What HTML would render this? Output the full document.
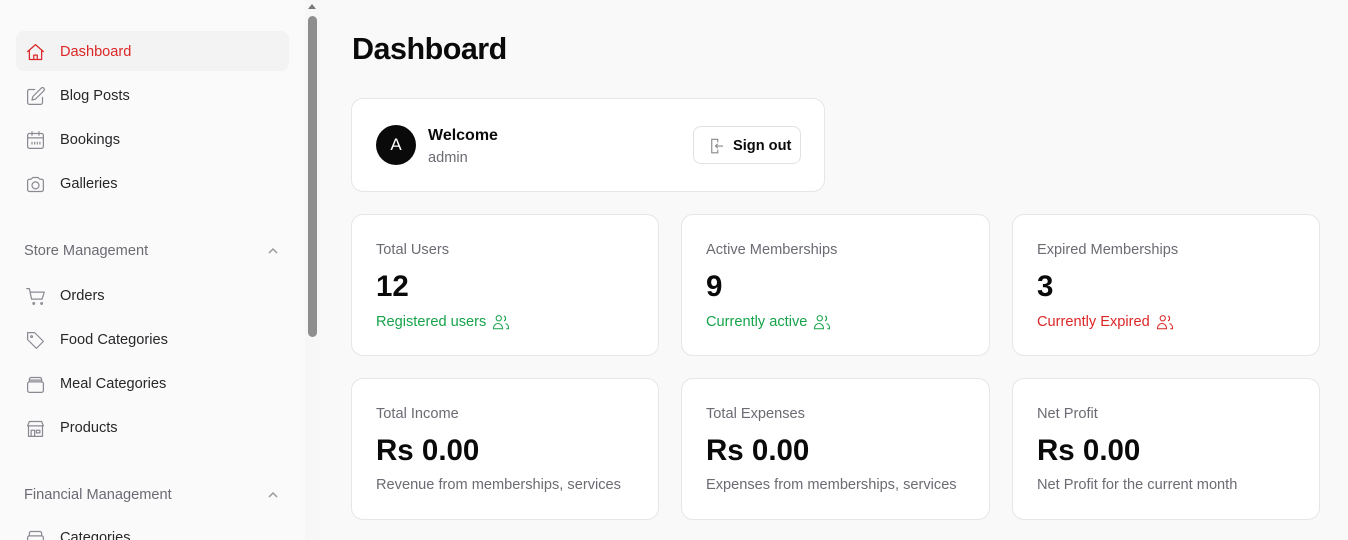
<!DOCTYPE html>
<html><head><style>
*{box-sizing:border-box;margin:0;padding:0}
html,body{width:1348px;height:540px;overflow:hidden}
body{background:#f9f9f9;font-family:"Liberation Sans",sans-serif;position:relative}
.side{position:absolute;left:0;top:0;width:305px;height:540px;background:#fafafa}
.sb{position:absolute;left:305px;top:0;width:15px;height:540px;background:#f7f7f7}
.thumb{position:absolute;left:308px;top:16px;width:9px;height:321px;background:#8e8e8e;border-radius:5px}
.arrow{position:absolute;left:308px;top:4px;width:0;height:0;border-left:4px solid transparent;border-right:4px solid transparent;border-bottom:5px solid #777}
.item{position:absolute;left:16px;width:273px;height:40px;display:flex;align-items:center;padding-left:9px;padding-top:2px;font-size:14.6px;color:#27272a;border-radius:8px}
.item svg{width:21px;height:21px;margin-right:14px;fill:none;stroke:#8a8a93;stroke-width:1.4;stroke-linecap:round;stroke-linejoin:round}
.item.act{background:#f3f3f3;color:#dc2626}
.item.act svg{stroke:#dc2626}
.sec{position:absolute;left:24px;width:255px;font-size:14.6px;color:#6b6b73;display:flex;justify-content:space-between;align-items:center}
.sec svg{width:12px;height:12px;fill:none;stroke:#999;stroke-width:1.5}
h1{position:absolute;left:352px;top:32px;font-size:30.5px;font-weight:700;color:#0a0a0a;letter-spacing:-0.5px}
.card{position:absolute;background:#fff;border:1px solid #e6e6e6;border-radius:12px}
.lbl{position:absolute;left:24px;top:27px;font-size:14.6px;color:#6b6b73}
.val{position:absolute;left:24px;top:55px;font-size:29.5px;color:#0a0a0a;font-weight:700}
.sub{position:absolute;left:24px;top:98px;font-size:14.6px;color:#6b6b73;display:flex;align-items:center}
.sub svg{width:18px;height:18px;margin-left:6px;fill:none;stroke:currentColor;stroke-width:1.4}
.g{color:#16a34a}.r{color:#dc2626}
</style></head><body>
<div class="side">
<div class="item act" style="top:31px"><svg viewBox="0 0 24 24"><path d="M3 11L12 3l9 8M5 9.5V20h14V9.5M10 20v-5h4v5"/></svg>Dashboard</div>
<div class="item" style="top:75px"><svg viewBox="0 0 24 24"><path d="M11 4H5a2 2 0 0 0-2 2v13a2 2 0 0 0 2 2h13a2 2 0 0 0 2-2v-6M18.5 2.5a2.1 2.1 0 0 1 3 3L12 15l-4 1 1-4z"/></svg>Blog Posts</div>
<div class="item" style="top:119px"><svg viewBox="0 0 24 24"><rect x="3" y="4" width="18" height="17" rx="2"/><path d="M3 9h18M8 2v4M16 2v4M8 14v2M11 14v2M14 14v2M17 14v2"/></svg>Bookings</div>
<div class="item" style="top:163px"><svg viewBox="0 0 24 24"><path d="M3 8a2 2 0 0 1 2-2h2l2-2h6l2 2h2a2 2 0 0 1 2 2v10a2 2 0 0 1-2 2H5a2 2 0 0 1-2-2z"/><circle cx="12" cy="13" r="4"/></svg>Galleries</div>
<div class="sec" style="top:243px">Store Management<svg viewBox="0 0 12 12"><path d="M2 8l4-4 4 4"/></svg></div>
<div class="item" style="top:275px"><svg viewBox="0 0 24 24"><path d="M2 3h3l2.5 12h12L22 7H6M9 20a1 1 0 1 0 0-.1M18 20a1 1 0 1 0 0-.1"/></svg>Orders</div>
<div class="item" style="top:319px"><svg viewBox="0 0 24 24"><path d="M3 3h8l10 10-8 8L3 11z"/><circle cx="7.5" cy="7.5" r="1"/></svg>Food Categories</div>
<div class="item" style="top:363px"><svg viewBox="0 0 24 24"><rect x="3" y="9" width="18" height="12" rx="2"/><path d="M5 9V6a2 2 0 0 1 2-2h10a2 2 0 0 1 2 2v3M5 7h14"/></svg>Meal Categories</div>
<div class="item" style="top:407px"><svg viewBox="0 0 24 24"><path d="M3 9l2-5h14l2 5M4 9v12h16V9M3 9h18M7 21v-7h4v7M13 14h4v3h-4z"/></svg>Products</div>
<div class="sec" style="top:487px">Financial Management<svg viewBox="0 0 12 12"><path d="M2 8l4-4 4 4"/></svg></div>
<div class="item" style="top:517px"><svg viewBox="0 0 24 24"><rect x="3" y="9" width="18" height="12" rx="2"/><path d="M5 9V6a2 2 0 0 1 2-2h10a2 2 0 0 1 2 2v3"/></svg>Categories</div>
</div>
<div class="sb"></div><div class="arrow"></div><div class="thumb"></div>
<h1>Dashboard</h1>
<div class="card" style="left:351px;top:98px;width:474px;height:94px">
<div style="position:absolute;left:24px;top:26px;width:40px;height:40px;border-radius:50%;background:#0a0a0a;color:#fff;font-size:17px;display:flex;align-items:center;justify-content:center">A</div>
<div style="position:absolute;left:76px;top:28px;font-size:16px;font-weight:700;color:#0a0a0a">Welcome</div>
<div style="position:absolute;left:76px;top:51px;font-size:14.6px;color:#6b6b73">admin</div>
<div style="position:absolute;left:341px;top:27px;width:108px;height:38px;border:1px solid #e2e2e2;border-radius:8px;display:flex;align-items:center;padding-left:14px;padding-top:1px;font-size:14.6px;font-weight:700;color:#0a0a0a"><svg viewBox="0 0 24 24" style="width:18px;height:18px;margin-right:7px;fill:none;stroke:#888;stroke-width:1.5"><path d="M9 3H5v18h4M9 3h4v4M13 17v4H9M20 12H10M13 9l-3 3 3 3"/></svg>Sign out</div>
</div>
<div class="card" style="left:351px;top:214px;width:308px;height:142px"><div class="lbl">Total Users</div><div class="val">12</div><div class="sub g">Registered users<svg viewBox="0 0 24 24"><circle cx="9" cy="7" r="3.5"/><path d="M2 21v-1a6 6 0 0 1 12 0v1zM16 4a3.5 3.5 0 0 1 0 6.5M18 14a6 6 0 0 1 4 6v1h-3"/></svg></div></div>
<div class="card" style="left:681px;top:214px;width:309px;height:142px"><div class="lbl">Active Memberships</div><div class="val">9</div><div class="sub g">Currently active<svg viewBox="0 0 24 24"><circle cx="9" cy="7" r="3.5"/><path d="M2 21v-1a6 6 0 0 1 12 0v1zM16 4a3.5 3.5 0 0 1 0 6.5M18 14a6 6 0 0 1 4 6v1h-3"/></svg></div></div>
<div class="card" style="left:1012px;top:214px;width:308px;height:142px"><div class="lbl">Expired Memberships</div><div class="val">3</div><div class="sub r">Currently Expired<svg viewBox="0 0 24 24"><circle cx="9" cy="7" r="3.5"/><path d="M2 21v-1a6 6 0 0 1 12 0v1zM16 4a3.5 3.5 0 0 1 0 6.5M18 14a6 6 0 0 1 4 6v1h-3"/></svg></div></div>
<div class="card" style="left:351px;top:378px;width:308px;height:142px"><div class="lbl">Total Income</div><div class="val">Rs 0.00</div><div class="sub">Revenue from memberships, services</div></div>
<div class="card" style="left:681px;top:378px;width:309px;height:142px"><div class="lbl">Total Expenses</div><div class="val">Rs 0.00</div><div class="sub">Expenses from memberships, services</div></div>
<div class="card" style="left:1012px;top:378px;width:308px;height:142px"><div class="lbl">Net Profit</div><div class="val">Rs 0.00</div><div class="sub">Net Profit for the current month</div></div>
</body></html>
